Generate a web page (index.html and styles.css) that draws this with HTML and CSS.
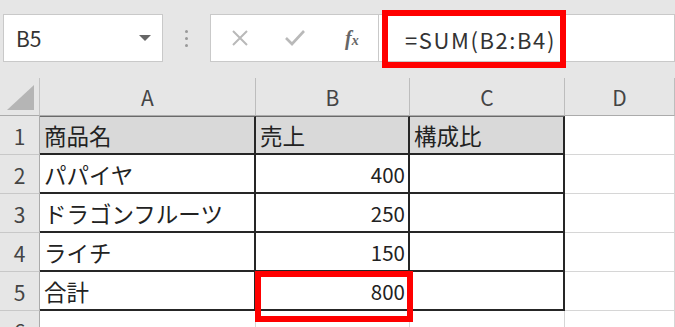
FILE: index.html
```html
<!DOCTYPE html>
<html lang="ja">
<head>
    <meta charset="UTF-8">
    <title>構成比</title>
    <link rel="stylesheet" href="styles.css">
</head>
<body>
    <!-- Formula bar -->
    <div class="toolbar">
        <div class="name-box">
            <span>B5</span>
            <span class="caret"></span>
        </div>
        <div class="grip"><i></i><i></i><i></i></div>
        <div class="fx-buttons">
            <svg class="btn-icon cancel" width="20" height="20" viewBox="0 0 20 20">
                <path d="M3 3 L17 17 M17 3 L3 17" stroke="#b9b9b9" stroke-width="2" fill="none"/>
            </svg>
            <svg class="btn-icon ok" width="22" height="20" viewBox="0 0 22 20">
                <path d="M2 10 L8 16 L20 3" stroke="#b9b9b9" stroke-width="2.6" fill="none"/>
            </svg>
            <span class="fx">f<sub>x</sub></span>
        </div>
        <div class="formula">
            <span class="formula-text">=SUM(B2:B4)</span>
        </div>
    </div>

    <!-- Sheet -->
    <div class="sheet">
        <div class="corner"><span class="corner-tri"></span></div>
        <div class="col-head">A</div>
        <div class="col-head">B</div>
        <div class="col-head">C</div>
        <div class="col-head">D</div>

        <div class="row-head">1</div>
        <div class="cell t head-row">商品名</div>
        <div class="cell t head-row">売上</div>
        <div class="cell t head-row">構成比</div>
        <div class="cell"></div>

        <div class="row-head">2</div>
        <div class="cell t">パパイヤ</div>
        <div class="cell t num">400</div>
        <div class="cell t"></div>
        <div class="cell"></div>

        <div class="row-head">3</div>
        <div class="cell t">ドラゴンフルーツ</div>
        <div class="cell t num">250</div>
        <div class="cell t"></div>
        <div class="cell"></div>

        <div class="row-head">4</div>
        <div class="cell t">ライチ</div>
        <div class="cell t num">150</div>
        <div class="cell t"></div>
        <div class="cell"></div>

        <div class="row-head">5</div>
        <div class="cell t">合計</div>
        <div class="cell t num selected">800<span class="mark"></span></div>
        <div class="cell t"></div>
        <div class="cell"></div>

        <div class="row-head">6</div>
        <div class="cell"></div>
        <div class="cell"></div>
        <div class="cell"></div>
        <div class="cell"></div>
    </div>
</body>
</html>
```

FILE: styles.css
```css
* {
    margin: 0;
    padding: 0;
    box-sizing: border-box;
}

body {
    width: 675px;
    height: 327px;
    overflow: hidden;
    background-color: #e6e6e6;
    font-family: "Noto Sans CJK JP", "Noto Sans", sans-serif;
    color: #222;
}

/* 数式バー */
.toolbar {
    display: flex;
    align-items: flex-start;
    height: 78px;
    padding-top: 14px;
    padding-left: 3px;
}

.name-box {
    display: flex;
    align-items: center;
    width: 160px;
    height: 48px;
    padding-left: 12px;
    background-color: #fff;
    border: 1px solid #c9c9c9;
    font-size: 21px;
    color: #333;
}

.caret {
    margin-left: auto;
    margin-right: 11px;
    width: 0;
    height: 0;
    border-left: 6px solid transparent;
    border-right: 6px solid transparent;
    border-top: 6px solid #666;
}

.grip {
    width: 47px;
    height: 48px;
    display: flex;
    flex-direction: column;
    align-items: center;
    justify-content: center;
    gap: 4px;
}

.grip i {
    display: block;
    width: 3px;
    height: 3px;
    border-radius: 50%;
    background-color: #999;
}

.fx-buttons {
    display: flex;
    align-items: center;
    width: 169px;
    height: 48px;
    background-color: #fff;
    border: 1px solid #c9c9c9;
}

.btn-icon.cancel {
    margin-left: 19px;
}

.btn-icon.ok {
    margin-left: 34px;
}

.fx {
    margin-left: 39px;
    font-family: "Liberation Serif", serif;
    font-style: italic;
    font-weight: bold;
    font-size: 20px;
    color: #666;
}

.fx sub {
    font-size: 14px;
    vertical-align: 0;
}

.formula {
    flex: 1;
    height: 48px;
    background-color: #fff;
    border: 1px solid #c9c9c9;
    border-left: none;
}

.formula-text {
    display: inline-block;
    margin-left: 9px;
    margin-top: 1px;
    width: 172px;
    height: 46px;
    padding-left: 17px;
    line-height: 46px;
    font-size: 22px;
    letter-spacing: 1.6px;
    color: #333;
    outline: 6px solid #ff0000;
}

/* シート */
.sheet {
    display: grid;
    grid-template-columns: 40px 216px 154px 155px 1fr;
    grid-template-rows: 38px repeat(6, 39px);
    background-color: #fff;
}

.corner,
.col-head,
.row-head {
    background-color: #e6e6e6;
    color: #444;
    font-size: 21px;
    display: flex;
    align-items: center;
    justify-content: center;
}

.corner {
    border-right: 1px solid #c4c4c4;
    border-bottom: 1px solid #ababab;
    position: relative;
}

.corner-tri {
    position: absolute;
    right: 5px;
    bottom: 5px;
    width: 0;
    height: 0;
    border-left: 27px solid transparent;
    border-bottom: 25px solid #b5b5b5;
}

.col-head {
    border-right: 1px solid #bdbdbd;
    border-bottom: 1px solid #ababab;
}

.row-head {
    border-right: 1px solid #ababab;
    border-bottom: 1px solid #c8c8c8;
    padding-top: 1px;
}

.cell {
    display: flex;
    align-items: center;
    padding: 0 4px;
    border-right: 1px solid #d6d6d6;
    border-bottom: 1px solid #d6d6d6;
    font-size: 22.5px;
    white-space: nowrap;
}

.cell.t {
    border-right: 2px solid #262626;
    border-bottom: 2px solid #262626;
}

.cell.head-row {
    background-color: #d9d9d9;
    border-top: 1px solid #6a6a6a;
}

.cell.num {
    justify-content: flex-end;
    padding-right: 3px;
    font-size: 20.5px;
}

.selected {
    position: relative;
}

.mark {
    position: absolute;
    top: -1px;
    left: -1px;
    width: 158px;
    height: 51px;
    border: 6px solid #ff0000;
    z-index: 2;
}
```
